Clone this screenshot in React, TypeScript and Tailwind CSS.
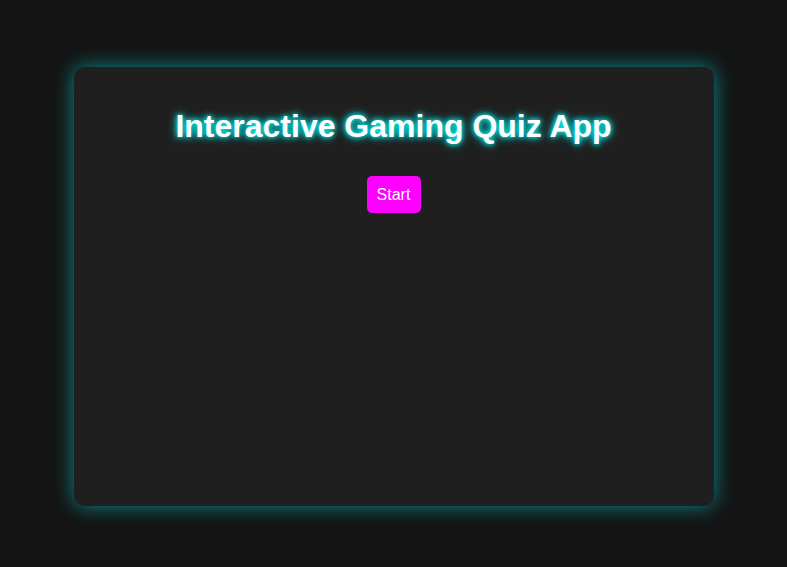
export default function App() {
  return (
    <div className="min-h-[567px] w-full bg-[#141414] pt-[67px]" style={{ fontFamily: '"Liberation Sans", Arial, sans-serif' }}>
      <div className="mx-auto flex h-[439px] w-[640px] flex-col items-center rounded-[10px] bg-[#1f1f1f] p-5 shadow-[0_0_20px_rgba(0,255,255,0.5)]">
        <h1 className="mt-[21px] mb-[21px] text-[32px] leading-[37px] font-bold text-white [text-shadow:0_0_5px_#0ff,0_0_10px_#0ff]">
          Interactive Gaming Quiz App
        </h1>
        <button className="mt-[10px] h-[37px] w-[54px] rounded-[5px] bg-[#ff00ff] text-[16px] text-white">
          Start
        </button>
      </div>
    </div>
  );
}
